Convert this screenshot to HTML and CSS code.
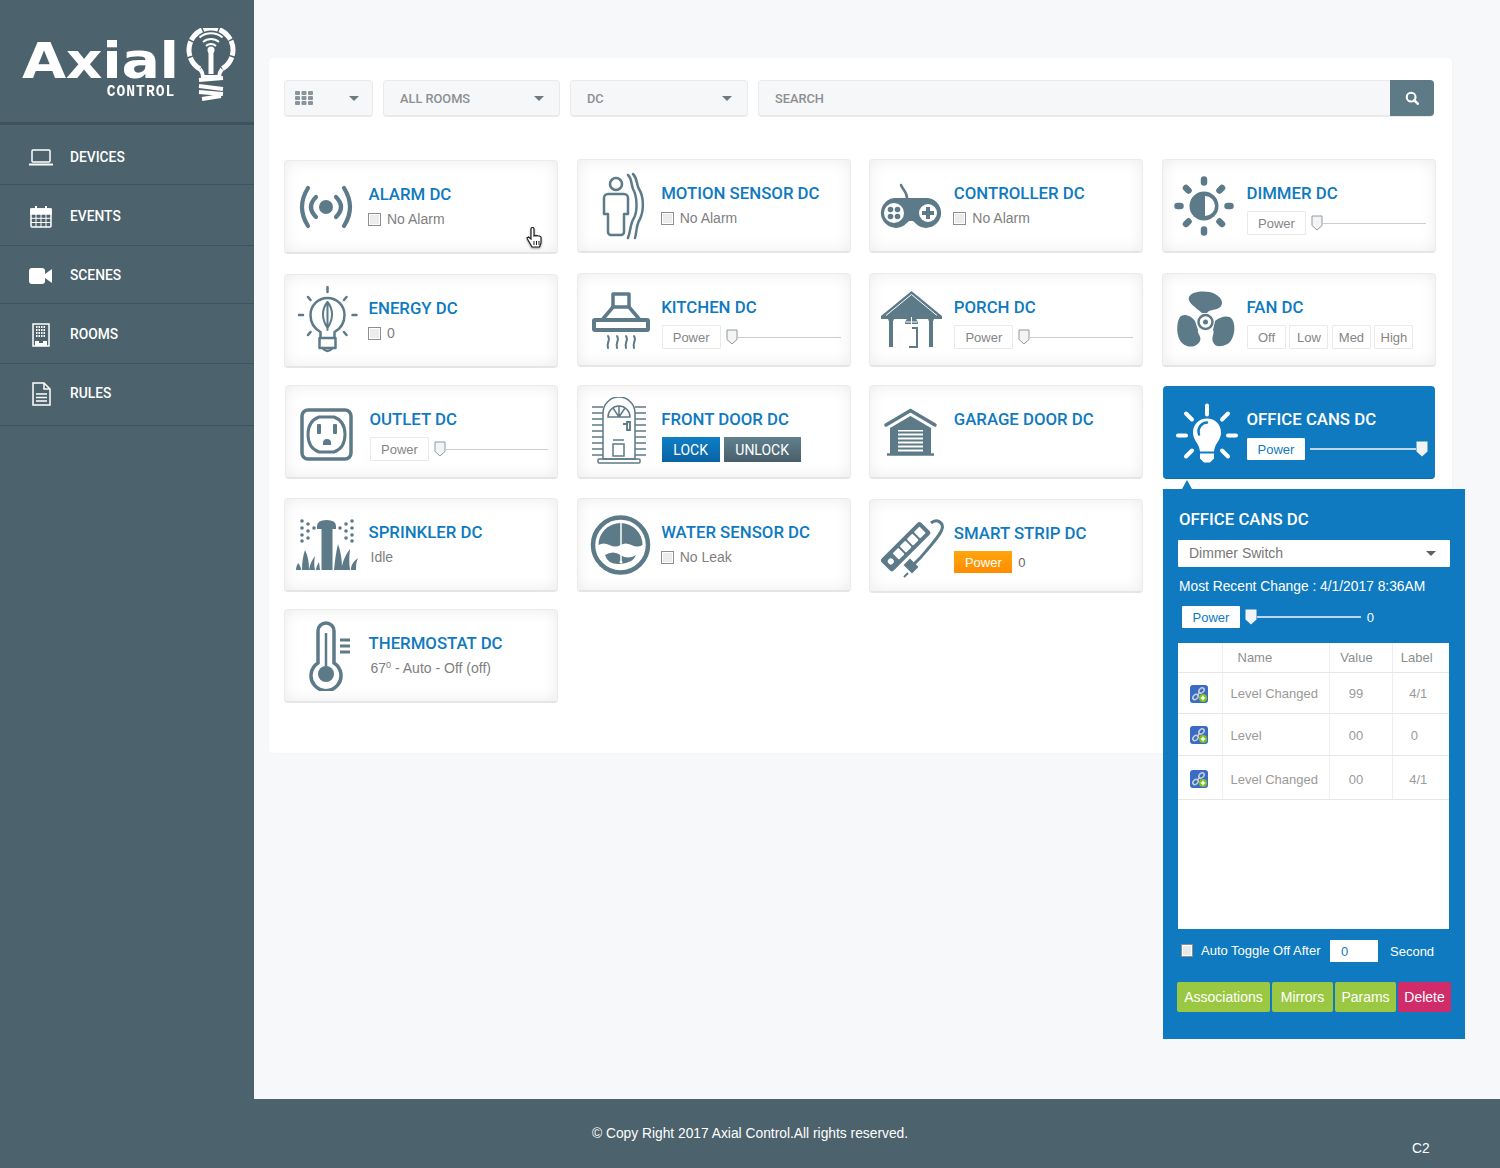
FILE: index.html
```html
<!DOCTYPE html>
<html lang="en">
<head>
<meta charset="utf-8">
<title>Axial Control</title>
<link rel="stylesheet" href="styles.css">
</head>
<body>
<svg class="defs" width="0" height="0" aria-hidden="true">
  <defs>
    <symbol id="thumb" viewBox="0 0 12 16"><path d="M1 1h10v9.5L6 15 1 10.500z" fill="#f4f4f4" stroke="#8b9aa2"/></symbol>
    <symbol id="thumbw" viewBox="0 0 12 16"><path d="M.5.500h11v10L6 15.500.5 10.500z" fill="#f1f3f5"/></symbol>
    <symbol id="link" viewBox="0 0 18 18">
      <rect width="18" height="18" rx="3" fill="#3a6cc4"/>
      <g fill="none" stroke="#c9ced6" stroke-width="1.500"><ellipse cx="5.500" cy="12" rx="3" ry="2.200" transform="rotate(-45 5.500 12)"/><ellipse cx="11.500" cy="5.500" rx="3" ry="2.200" transform="rotate(-45 11.500 5.500)"/><path d="M7 10.500l3-3.500"/></g>
      <circle cx="13" cy="13" r="4" fill="#7fc31c"/><path d="M13 10.800v4.400M10.800 13h4.400" stroke="#fff" stroke-width="1.500"/>
    </symbol>
  </defs>
</svg>
<div class="app">
  <div class="top">
    <aside class="sidebar">
      <div class="brand">
        <div class="wordmark">
          <span class="axial">Axial</span>
          <span class="control">CONTROL</span>
        </div>
        <svg class="bulb-logo" width="50" height="76" viewBox="0 0 50 76">
          <g fill="none" stroke="#fff">
            <path d="M14 41A22 22 0 1 1 36 41" stroke-width="5" stroke-dasharray="15 1.500"/>
            <path d="M17 14a12 12 0 0 1 16 0M13.500 9.500a18 18 0 0 1 23 0" stroke-width="2"/>
            <path d="M20 18a7 7 0 0 1 10 0" stroke-width="2"/>
            <path d="M25 22V46" stroke-width="5"/>
            <path d="M14 41q3 4 3 8h16q0-4 3-8" stroke-width="4"/>
            <path d="M13 52l24-2M13 58l24 3M13 64l24 2M16 71l19-3" stroke-width="4"/>
          </g>
          <circle cx="25" cy="22" r="3.500" fill="#fff"/>
        </svg>
      </div>
      <nav class="nav">
        <a class="nav-item nav-a"><span class="nav-ic"><svg width="26" height="20" viewBox="0 0 26 20" fill="none" stroke="#fff"><rect x="4" y="2" width="18" height="12" rx="1" stroke-width="1.500"/><path d="M1 16.500h24" stroke-width="2"/></svg></span>DEVICES</a>
        <a class="nav-item nav-b"><span class="nav-ic"><svg width="24" height="24" viewBox="0 0 24 24" fill="none" stroke="#fff" stroke-width="1.500"><rect x="2" y="4" width="20" height="18" rx="1"/><path d="M2 4h20v5H2z" fill="#fff"/><path d="M7 1v5M17 1v5" stroke-width="2"/><path d="M2 13.300h20M2 17.500h20M7 9v13M12 9v13M17 9v13" stroke-width="1"/></svg></span>EVENTS</a>
        <a class="nav-item nav-c"><span class="nav-ic"><svg width="24" height="16" viewBox="0 0 24 16" fill="#fff"><rect width="16" height="16" rx="3"/><path d="M16 6l7-5v14l-7-5z"/></svg></span>SCENES</a>
        <a class="nav-item nav-d"><span class="nav-ic"><svg width="18" height="24" viewBox="0 0 18 24" fill="none" stroke="#fff" stroke-width="1.500"><rect x="1" y="1" width="16" height="22"/><path d="M4 4h10M4 7h10M4 10h10M4 13h10" stroke-width="1.800" stroke-dasharray="1.500 1"/><path d="M3 23v-5h4v2h4v-2h4v5" fill="#fff" stroke="none"/></svg></span>ROOMS</a>
        <a class="nav-item nav-e"><span class="nav-ic"><svg width="20" height="24" viewBox="0 0 20 24" fill="none" stroke="#fff" stroke-width="1.500"><path d="M2 1h11l6 6v16H2z"/><path d="M13 1v6h6"/><path d="M5 12h11M5 15.500h11M5 19h11" stroke-width="1.300"/></svg></span>RULES</a>
      </nav>
    </aside>
    <main class="main">
      <section class="panel">
        <div class="toolbar">
          <div class="drop drop-view">
            <svg width="18" height="14" viewBox="0 0 18 14" fill="#8b9499"><rect width="5" height="4" rx="1"/><rect x="6.500" width="5" height="4" rx="1"/><rect x="13" width="5" height="4" rx="1"/><rect y="5" width="5" height="4" rx="1"/><rect x="6.500" y="5" width="5" height="4" rx="1"/><rect x="13" y="5" width="5" height="4" rx="1"/><rect y="10" width="5" height="4" rx="1"/><rect x="6.500" y="10" width="5" height="4" rx="1"/><rect x="13" y="10" width="5" height="4" rx="1"/></svg>
            <span class="caret"></span>
          </div>
          <div class="drop drop-room"><span class="lbl">ALL ROOMS</span><span class="caret"></span></div>
          <div class="drop drop-type"><span class="lbl">DC</span><span class="caret"></span></div>
          <div class="search">
            <span class="lbl">SEARCH</span>
            <span class="search-btn"><svg width="14" height="14" viewBox="0 0 16 16" fill="none" stroke="#fff" stroke-width="2.400"><circle cx="7" cy="7" r="5"/><path d="M10.500 10.500l4 4" stroke-width="3" stroke-linecap="round"/></svg></span>
          </div>
        </div>

        <div class="grid">
          <article class="card nudge-y">
            <div class="icon"><svg width="70" height="70" viewBox="0 0 70 70" fill="none" stroke="currentColor" stroke-width="4.200" stroke-linecap="round"><circle cx="35" cy="35" r="7" fill="currentColor" stroke="none"/><path d="M25 25Q15 35 25 45M45 25Q55 35 45 45"/><path d="M17 16Q5 35 17 54M53 16Q65 35 53 54"/></svg></div>
            <div class="body"><h3 class="title">ALARM DC</h3><div class="status"><span class="check"></span>No Alarm</div></div>
            <svg class="cursor" width="18" height="22" viewBox="0 0 18 22"><path d="M5 2a1.500 1.500 0 0 1 3 0v7l1-.5 1 .5 1-.5 1 .5 1.500 0 1.500 1v6l-1.500 4H6L2 13l-1-2 1.500-1L5 12z" fill="#fff" stroke="#222" stroke-width="1.200"/><path d="M8 14v4M10.500 14v4M13 14v4" stroke="#222"/></svg>
          </article>
          <article class="card">
            <div class="icon"><svg width="70" height="70" viewBox="0 0 70 70" fill="none" stroke="currentColor" stroke-width="2.500" stroke-linecap="round" stroke-linejoin="round"><g transform="translate(4 0)"><circle cx="28" cy="13" r="6"/><path d="M20 23h16a4 4 0 0 1 4 4v16h-4v18a3 3 0 0 1-3 3h-10a3 3 0 0 1-3-3V43h-4V27a4 4 0 0 1 4-4z"/><path d="M40 4c4 4 3 9 5 14 4 7 5 21 1 29-4 6-3 12-6 20"/><path d="M45 3c5 5 3 10 6 15 5 8 5 21 1 30-4 6-3 12-5 19"/></g></svg></div>
            <div class="body"><h3 class="title">MOTION SENSOR DC</h3><div class="status"><span class="check"></span>No Alarm</div></div>
          </article>
          <article class="card">
            <div class="icon"><svg width="70" height="70" viewBox="0 0 70 70"><path d="M18 27H52A15 15 0 1 1 42 54.500L37 50H33L28 54.500A15 15 0 1 1 18 27Z" fill="currentColor"/><path d="M31 27C31 21 27 19 25 14" fill="none" stroke="currentColor" stroke-width="2.500" stroke-linecap="round"/><circle cx="18" cy="42" r="10" fill="#fff"/><circle cx="52" cy="42" r="9" fill="#fff"/><g fill="currentColor"><circle cx="14.500" cy="38.500" r="2.800"/><circle cx="21.500" cy="38.500" r="2.800"/><circle cx="14.500" cy="45.500" r="2.800"/><circle cx="21.500" cy="45.500" r="2.800"/><path d="M50 36h4v4h4v4h-4v4h-4v-4h-4v-4h4z"/></g></svg></div>
            <div class="body"><h3 class="title">CONTROLLER DC</h3><div class="status"><span class="check"></span>No Alarm</div></div>
          </article>
          <article class="card">
            <div class="icon"><svg width="70" height="70" viewBox="0 0 70 70"><circle cx="35" cy="35" r="14.500" fill="currentColor"/><path d="M36 25A10 10 0 0 1 36 45Z" fill="#fff"/><path d="M35 8.500v3M35 58.500v3M8.500 35h3M58.500 35h3M17 17l2.500 2.500M50.500 50.500l2.500 2.500M53 17l-2.500 2.500M19.500 50.500L17 53" stroke="currentColor" stroke-width="6.500" stroke-linecap="round"/></svg></div>
            <div class="body"><h3 class="title">DIMMER DC</h3><div class="ctrl"><span class="btn">Power</span><span class="slider"><svg class="thumb"><use href="#thumb"/></svg><span class="track"></span></span></div></div>
          </article>

          <article class="card nudge-y">
            <div class="icon"><svg width="70" height="70" viewBox="0 0 70 70" fill="none" stroke="currentColor" stroke-width="2.500" stroke-linecap="round" stroke-linejoin="round"><g transform="translate(1.500 0)"><path d="M28 52V46C21 42 18 36 18 29a17 17 0 0 1 34 0c0 7-3 13-10 17v6"/><path d="M27 52h16v10H27z"/><path d="M30 62q5 6 10 0"/><path d="M35 16c-6 7-6 17 0 26c6-9 6-19 0-26zM35 16v28" stroke-width="2"/><path d="M35 1v5M6.500 29h4M60 29h4M15.500 11L18 14M54 11l-2.500 3M15.500 49L18 46M54 49l-2.500-3"/></g></svg></div>
            <div class="body"><h3 class="title">ENERGY DC</h3><div class="status"><span class="check"></span>0</div></div>
          </article>
          <article class="card">
            <div class="icon"><svg width="70" height="70" viewBox="0 0 70 70" fill="none" stroke="currentColor" stroke-width="3.500" stroke-linejoin="round"><g transform="translate(2 0)"><path d="M27 9h16v13H27z"/><path d="M27 22L16 35M43 22l11 13"/><rect x="8" y="35" width="54" height="10" stroke-width="4" rx="1"/><path d="M22 51c3 4-2 7 0 12M31 51c3 4-2 7 0 12M40 51c3 4-2 7 0 12M48 51c3 4-2 7 0 12" stroke-width="2" stroke-linecap="round"/></g></svg></div>
            <div class="body"><h3 class="title">KITCHEN DC</h3><div class="ctrl"><span class="btn">Power</span><span class="slider"><svg class="thumb"><use href="#thumb"/></svg><span class="track"></span></span></div></div>
          </article>
          <article class="card">
            <div class="icon"><svg width="70" height="70" viewBox="0 0 70 70"><path d="M35.500 6L66 31V34H5V31Z" fill="currentColor"/><path d="M35.500 9.500L61 30.500M35.500 9.500L10 30.500" stroke="#fff" stroke-width="1"/><path d="M13 33h4v29h-4zM53 33h4v29h-4z" fill="currentColor"/><circle cx="15" cy="34" r="2.800" fill="currentColor"/><circle cx="55" cy="34" r="2.800" fill="currentColor"/><path d="M29 39a6.500 7 0 0 1 13 0z" fill="currentColor"/><path d="M35.500 32v7M30 37h11" stroke="#fff"/><path d="M36 43h5v19h-8" fill="none" stroke="currentColor" stroke-width="2"/></svg></div>
            <div class="body"><h3 class="title">PORCH DC</h3><div class="ctrl"><span class="btn">Power</span><span class="slider"><svg class="thumb"><use href="#thumb"/></svg><span class="track"></span></span></div></div>
          </article>
          <article class="card">
            <div class="icon"><svg width="70" height="70" viewBox="0 0 70 70" fill="currentColor"><path d="M33 28C26 22 18 17 20 12C23 6 38 5 46 9C54 13 55 20 50 23C44 26 41 24 38 28Z"/><path d="M26 36C22 30 14 28 11 32C7 38 7 52 13 58C20 64 28 62 31 56C33 51 28 49 29 45Z"/><path d="M46 36C52 31 60 30 63 34C67 40 66 52 60 58C52 63 46 62 44 57C42 52 46 48 44 45Z"/><circle cx="36.500" cy="37" r="9" fill="#fff"/><circle cx="36.500" cy="37" r="7" fill="none" stroke="currentColor" stroke-width="2.500"/><circle cx="36.500" cy="37" r="2.500"/></svg></div>
            <div class="body"><h3 class="title">FAN DC</h3><div class="ctrl ctrl-fan"><span class="btn btn-fan">Off</span><span class="btn btn-fan">Low</span><span class="btn btn-fan">Med</span><span class="btn btn-fan">High</span></div></div>
          </article>

          <article class="card nudge-x">
            <div class="icon"><svg width="70" height="70" viewBox="0 0 70 70"><rect x="10" y="13" width="49" height="49" rx="6" fill="none" stroke="currentColor" stroke-width="3.500"/><path d="M27 20h15q11 4 11 17.500T42 55H27Q16 51 16 37.500T27 20Z" fill="none" stroke="currentColor" stroke-width="3"/><rect x="25" y="27" width="4" height="10" rx="1" fill="currentColor"/><rect x="41" y="27" width="4" height="10" rx="1" fill="currentColor"/><path d="M31 48v-2a4 4 0 0 1 8 0v2z" fill="currentColor"/></svg></div>
            <div class="body"><h3 class="title">OUTLET DC</h3><div class="ctrl"><span class="btn">Power</span><span class="slider"><svg class="thumb"><use href="#thumb"/></svg><span class="track"></span></span></div></div>
          </article>
          <article class="card">
            <div class="icon"><svg width="70" height="70" viewBox="0 0 70 70" fill="none" stroke="currentColor" stroke-width="1.500"><path d="M19 40V16a16 16 0 0 1 32 0v46H19z"/><path d="M24 20a11 11 0 0 1 22 0zM35 9v11M29 11l6 9M41 11l-6 9"/><path d="M8 10h11M8 16h11M8 22h11M8 28h11M8 34h11M8 40h11M8 46h11M8 52h11M8 58h11M51 10h11M51 16h11M51 22h11M51 28h11M51 34h11M51 40h11M51 46h11M51 52h11M51 58h11"/><rect x="29" y="47" width="11" height="12"/><path d="M29 43h11"/><path d="M39 27h5M43 25h3v8h-3z" stroke-width="1.800"/><rect x="14" y="62" width="42" height="4" rx="1"/></svg></div>
            <div class="body"><h3 class="title">FRONT DOOR DC</h3><div class="ctrl ctrl-lock"><span class="act act-lock">LOCK</span><span class="act act-unlock">UNLOCK</span></div></div>
          </article>
          <article class="card">
            <div class="icon"><svg width="70" height="70" viewBox="0 0 70 70"><path d="M10 28L34.500 13.500L59 28" fill="none" stroke="currentColor" stroke-width="3.500" stroke-linecap="round"/><path d="M34.500 19L55 31V57H14V31Z" fill="currentColor"/><path d="M22 33h25v23H22z" fill="#fff"/><path d="M22 35.500h25M22 39.500h25M22 43.500h25M22 47.500h25M22 51.500h25M22 55.500h25" stroke="currentColor" stroke-width="2"/><path d="M11 57.500h47" stroke="currentColor" stroke-width="2.500"/></svg></div>
            <div class="body"><h3 class="title">GARAGE DOOR DC</h3></div>
          </article>
          <article class="card card-on">
            <div class="icon"><svg width="70" height="70" viewBox="0 0 70 70" fill="#fff"><g transform="translate(2 2.500)"><path d="M36 18c-8 0-14 6-14 14 0 8 6 10 7 19h14c1-9 7-11 7-19 0-8-6-14-14-14zM29 53h14v5l-4 4h-6l-4-4z"/><path d="M28 34c-2-7 3-12 8-12" stroke="#0f7abf" stroke-width="2.500" fill="none" stroke-linecap="round"/><path d="M36 5v9M7 35h8M57 35h8M15 13l6 6M57 13l-6 6M15 56l6-6M57 56l-6-6" stroke="#fff" stroke-width="4" stroke-linecap="round"/></g></svg></div>
            <div class="body"><h3 class="title">OFFICE CANS DC</h3><div class="ctrl"><span class="btn btn-on">Power</span><span class="slider"><span class="track track-on"></span><svg class="thumb"><use href="#thumbw"/></svg></span></div></div>
          </article>

          <article class="card">
            <div class="icon"><svg width="70" height="70" viewBox="0 0 70 70" fill="currentColor"><path d="M26 19v-3q0-6 9.500-6t9.500 6v3h-3.500v41h-11V19z"/><path d="M5 60C5 57 6 55 7 53C9 55 10 58 10 60ZM11 60C11 52 12 46 14 40C17 46 18 52 18 60ZM18 60C19 54 21 50 24 46C23 51 23 56 24 60ZM25 60C25 58 26 55 28 52L29 60ZM43 60C44 50 45 42 47 34C50 42 51 50 51 60ZM50 60C52 50 55 44 59 39C58 47 58 53 59 60ZM60 60C60 55 62 52 67 48C65 52 65 56 65 60Z"/><g><circle cx="11" cy="11" r="1.800"/><circle cx="11" cy="18" r="1.800"/><circle cx="11" cy="25" r="1.800"/><circle cx="17" cy="14" r="1.800"/><circle cx="17" cy="21" r="1.800"/><circle cx="11" cy="31" r="1.800"/><circle cx="23" cy="18" r="1.800"/><circle cx="17" cy="28" r="1.800"/><circle cx="61" cy="11" r="1.800"/><circle cx="61" cy="18" r="1.800"/><circle cx="61" cy="25" r="1.800"/><circle cx="55" cy="14" r="1.800"/><circle cx="55" cy="21" r="1.800"/><circle cx="61" cy="31" r="1.800"/><circle cx="49" cy="18" r="1.800"/><circle cx="55" cy="28" r="1.800"/></g></svg></div>
            <div class="body"><h3 class="title">SPRINKLER DC</h3><div class="status status-plain">Idle</div></div>
          </article>
          <article class="card">
            <div class="icon"><svg width="70" height="70" viewBox="0 0 70 70"><circle cx="36.500" cy="35" r="27.500" fill="none" stroke="currentColor" stroke-width="4.500"/><path d="M14.500 35a22 22 0 0 1 44 0q-5 3-11 0t-11 0t-11 0t-11 0z" fill="currentColor"/><path d="M21 45q8-5 15.500 0t15.500 0q-3 8-15.500 9T21 45z" fill="currentColor"/><path d="M37 13v39" stroke="#fff" stroke-width="1.500"/><circle cx="37" cy="52" r="1.500" fill="#fff"/></svg></div>
            <div class="body"><h3 class="title">WATER SENSOR DC</h3><div class="status"><span class="check"></span>No Leak</div></div>
          </article>
          <article class="card nudge-y">
            <div class="icon"><svg width="70" height="70" viewBox="0 0 70 70" fill="none" stroke="currentColor"><g transform="rotate(-45 30 36)"><rect x="2" y="27" width="56" height="17" rx="3" fill="currentColor" stroke="none"/><g fill="#fff" stroke="none"><circle cx="9" cy="35.500" r="3"/><rect x="16" y="31" width="8" height="9" rx="1"/><rect x="26" y="31" width="8" height="9" rx="1"/><rect x="36" y="31" width="8" height="9" rx="1"/><rect x="46" y="31" width="8" height="9" rx="1"/></g></g><path d="M55 12c6-5 13 0 11 6-1 5-9 14-21 28l-9 9" stroke-width="3"/><path d="M41 56l-7-7-5 5 7 7zM32 62l-4 4" fill="currentColor" stroke-width="2"/></svg></div>
            <div class="body"><h3 class="title">SMART STRIP DC</h3><div class="ctrl ctrl-strip"><span class="act-power">Power</span><span class="num">0</span></div></div>
          </article>

          <article class="card row-start">
            <div class="icon"><svg width="70" height="70" viewBox="0 0 70 70"><path d="M27 42V10a8 8 0 0 1 16 0v32a15 15 0 1 1-16 0Z" fill="none" stroke="currentColor" stroke-width="3.500"/><circle cx="35" cy="53" r="8" fill="currentColor"/><path d="M35 12V50" stroke="currentColor" stroke-width="2.500"/><path d="M49 19h10M49 25h10M49 31h10" stroke="currentColor" stroke-width="3"/></svg></div>
            <div class="body"><h3 class="title">THERMOSTAT DC</h3><div class="status status-plain">67<sup>0</sup> - Auto - Off (off)</div></div>
          </article>
        </div>
      </section>

      <section class="popup">
        <span class="popup-arrow"></span>
        <h2 class="popup-title">OFFICE CANS DC</h2>
        <div class="type-select"><span>Dimmer Switch</span><span class="caret caret-dark"></span></div>
        <p class="recent">Most Recent Change : 4/1/2017 8:36AM</p>
        <div class="popup-power"><span class="btn btn-on">Power</span><span class="slider"><svg class="thumb"><use href="#thumbw"/></svg><span class="track track-on"></span></span><span class="pop-num">0</span></div>
        <div class="table-box">
          <table class="events">
            <colgroup><col class="c1"><col class="c2"><col class="c3"><col class="c4"></colgroup>
            <thead><tr class="r-head"><th></th><th class="th-name">Name</th><th class="th-val">Value</th><th class="th-lab">Label</th></tr></thead>
            <tbody>
              <tr class="r1"><td class="ctr"><svg class="link" width="18" height="18"><use href="#link"/></svg></td><td>Level Changed</td><td class="ctr col-val">99</td><td class="ctr col-lab">4/1</td></tr>
              <tr class="r1"><td class="ctr"><svg class="link" width="18" height="18"><use href="#link"/></svg></td><td>Level</td><td class="ctr col-val">00</td><td class="ctr col-zero">0</td></tr>
              <tr class="r2"><td class="ctr"><svg class="link" width="18" height="18"><use href="#link"/></svg></td><td>Level Changed</td><td class="ctr col-val">00</td><td class="ctr col-lab">4/1</td></tr>
            </tbody>
          </table>
        </div>
        <div class="toggle-row">
          <span class="check check-pop"></span>
          <span class="toggle-label">Auto Toggle Off After</span>
          <span class="toggle-input">0</span>
          <span class="toggle-sec">Second</span>
        </div>
        <div class="pop-actions">
          <span class="pbtn pbtn-a">Associations</span>
          <span class="pbtn pbtn-b">Mirrors</span>
          <span class="pbtn pbtn-b">Params</span>
          <span class="pbtn pbtn-del">Delete</span>
        </div>
      </section>
    </main>
  </div>
  <footer class="footer">
    <span>© Copy Right 2017 Axial Control.All rights reserved.</span>
    <span class="build">C2</span>
  </footer>
</div>
</body>
</html>
```

FILE: styles.css
```css
* { box-sizing: border-box; }
html, body { margin: 0; height: 100%; }
body { font-family: "Liberation Sans", Arial, sans-serif; color: #808080; background: #f7f8fa; }
.defs { position: absolute; }
.app { display: flex; flex-direction: column; height: 1168px; overflow: hidden; }
.top { display: flex; flex: 1; min-height: 0; }

/* sidebar */
.sidebar { width: 254px; flex: none; background: #4c626c; }
.brand { height: 125px; border-bottom: 3px solid #3f525b; display: flex; align-items: flex-start; padding: 28px 0 0 22px; gap: 8px; }
.wordmark { width: 156px; display: flex; flex-direction: column; align-items: flex-end; padding-top: 14px; color: #fff; }
.axial { display: block; width: 156px; font: 700 50px/38px "DejaVu Sans", sans-serif; transform: scaleX(1.14); transform-origin: left center; letter-spacing: -0.3px; }
.control { font: 700 15px/15px "Liberation Mono", monospace; letter-spacing: 1px; margin: 4px 2px 0 0; transform: scale(.98, 1.15); }
.bulb-logo { flex: none; }
.nav { display: flex; flex-direction: column; }
.nav-item { display: flex; align-items: center; font: 500 13.800px/1 Roboto, sans-serif; color: #fff; border-bottom: 1px solid #3f535d; }
.nav-a { height: 60px; padding-top: 6px; }
.nav-b { height: 61px; padding-top: 3px; }
.nav-c { height: 58px; padding-top: 2px; }
.nav-d { height: 60px; padding-top: 2px; }
.nav-e { height: 62px; padding-bottom: 2px; }
.nav-ic { width: 70px; padding-left: 12px; display: flex; justify-content: center; flex: none; }

/* main */
.main { position: relative; flex: 1; padding: 58px 48px 0 15px; }
.panel { width: 1183px; height: 695px; background: #fff; border-radius: 4px; box-shadow: 0 0 2px rgba(0,0,0,.06); padding: 22px 15px; }
.toolbar { display: flex; gap: 10px; height: 37px; font: 500 12.800px/1 Roboto, sans-serif; color: #8b8f92; }
.lbl { padding-top: 2px; }
.drop { display: flex; align-items: center; justify-content: space-between; background: #f6f7f9; border: 1px solid #e8eaec; border-bottom-width: 2px; border-radius: 4px; }
.drop-view { width: 89px; padding: 0 13px 0 10px; }
.drop-room { width: 177px; padding: 0 15px 0 16px; }
.drop-type { width: 178px; padding: 0 15px 0 16px; }
.caret { width: 0; height: 0; border: 5px solid transparent; border-top: 5px solid #6f7a80; border-bottom: 0; }
.caret-dark { border-top-color: #5d6468; }
.search { flex: 1; margin-right: 3px; display: flex; align-items: center; justify-content: space-between; background: #f6f7f9; border: 1px solid #e8eaec; border-bottom-width: 2px; border-radius: 4px; padding-left: 16px; }
.search-btn { width: 44px; height: 36px; margin: -1px -1px -1px 0; background: #5e7a87; border-radius: 0 4px 4px 0; display: flex; align-items: center; justify-content: center; }

/* grid */
.grid { display: grid; grid-template-columns: repeat(4, 274px); column-gap: 18.670px; grid-template-rows: 114px 112px 113px 111px 94px; margin-top: 42px; align-items: start; }
.card { position: relative; display: flex; height: 94px; background: #fff; border-radius: 4px; border: 1px solid #ebebec; border-bottom: 2px solid #e4e5e6; box-shadow: inset 0 0 16px rgba(0,0,0,.08); color: #5d7a88; }
.nudge-y { margin-top: 1px; }
.nudge-x { margin-left: 1px; }
.row-start { grid-column: 1; }
.icon { width: 84px; flex: none; display: flex; align-items: center; justify-content: center; margin-left: -1px; margin-right: .500px; padding-top: 1px; }
.body { flex: 1; min-width: 0; padding: 23px 9px 0 0; }
.title { margin: 0; font: 500 16.800px/20px Roboto, sans-serif; color: #0f7abf; }
.status { display: flex; align-items: center; height: 16px; margin-top: 7px; font: 14px/16px "Liberation Sans", sans-serif; color: #808080; margin-left: -.500px; }
.status-plain { margin-left: 2px; display: block; }
sup { font-size: 9px; line-height: 0; vertical-align: 5px; }
.check { width: 13px; height: 13px; background: #ececec; border: 1px solid #8e8e8e; box-shadow: inset 0 0 0 1px #fff; margin-right: 6px; flex: none; }
.ctrl { display: flex; align-items: center; height: 24px; margin: 8px 0 0 .500px; }
.btn { display: flex; align-items: center; justify-content: center; width: 59px; height: 24px; flex: none; border: 1px solid #e9e9e9; background: #fff; font: 13px/1 "Liberation Sans", sans-serif; color: #858585; border-radius: 1px; }
.ctrl-fan { gap: 3.500px; }
.btn-fan { width: 39px; }
.btn-on { border: 0; color: #0f7abf; height: 22px; width: 58px; }
.slider { display: flex; flex: 1; align-items: center; margin-left: 5px; }
.thumb { width: 12px; height: 16px; flex: none; }
.track { flex: 1; height: 1px; background: #c9cdd0; }
.track-on { background: #bcd9ec; height: 1.500px; }
.ctrl-lock { gap: 4px; height: 25px; }
.act { height: 25px; display: flex; align-items: center; justify-content: center; color: #fff; font: 14px/1 Roboto, sans-serif; }
.act-lock { width: 58px; background: linear-gradient(#0f7fc6, #0a62a3); }
.act-unlock { width: 77px; background: linear-gradient(#60808e, #485f6a); }
.ctrl-strip { height: 22px; gap: 6px; }
.act-power { width: 58px; height: 22px; display: flex; align-items: center; justify-content: center; color: #fff; font: 13px/1 "Liberation Sans", sans-serif; background: linear-gradient(#ffa60f, #ff8c00); }
.num { font: 13px/1 "Liberation Sans", sans-serif; color: #666; }
.card-on { background: #0f7abf; border: 0; border-bottom: 1px solid #0d6dac; box-shadow: none; margin: 1px 0 0 1px; height: 93px; width: 272px; }
.card-on .title { color: #fff; }
.card-on .icon { color: #fff; }
.card-on .body { padding-right: 7px; }
.cursor { position: absolute; left: 241px; top: 66px; filter: drop-shadow(0 1px 1px rgba(0,0,0,.4)); }

/* popup */
.popup { position: absolute; left: 909px; top: 489px; width: 302px; height: 550px; background: #0f7abf; padding: 20px 14px 0 15px; color: #fff; }
.popup-arrow { position: absolute; left: 19px; top: -9px; width: 0; height: 0; border: 5px solid transparent; border-bottom: 9px solid #0f7abf; border-top: 0; }
.popup-title { margin: 0 0 0 1px; font: 500 16.800px/20px Roboto, sans-serif; color: #fff; }
.type-select { display: flex; align-items: center; justify-content: space-between; width: 272px; height: 27px; margin-top: 11px; padding: 0 14px 1px 11px; background: #fff; color: #777; font: 14px/1 "Liberation Sans", sans-serif; border-radius: 1px; }
.recent { margin: 12px 0 0 1px; font: 13.800px/16px "Liberation Sans", sans-serif; }
.popup-power { display: flex; align-items: center; height: 22px; margin: 11px 0 0 4px; width: 192px; }
.pop-num { font: 13px/1 "Liberation Sans", sans-serif; margin-left: 6px; }
.table-box { width: 271px; height: 286px; margin-top: 15px; background: #fff; }
.events { width: 271px; border-collapse: collapse; table-layout: fixed; font: 13px/1 "Liberation Sans", sans-serif; color: #9a9a9a; }
.c1 { width: 44px; }
.c2 { width: 107px; }
.c3 { width: 63px; }
.c4 { width: 57px; }
.events th { font-weight: 400; color: #8e8e8e; text-align: center; border-right: 1px solid #eee; border-bottom: 1px solid #e6e6e6; }
.events td { padding: 2px 0 0 8px; border-right: 1px solid #eee; border-bottom: 1px solid #e6e6e6; }
.events td.ctr { padding: 2px 0 0; text-align: center; }
.events .r2 td { padding-top: 4px; }
.events td.col-val { padding-right: 9px; }
.events td.col-lab { padding-right: 5px; }
.events td.col-zero { padding-right: 13px; }
.events th.th-val { padding-right: 9px; }
.events th.th-lab { padding-right: 9px; }
.events tr > :last-child { border-right: 0; }
.th-name { text-align: left !important; padding-left: 15px; }
.r-head { height: 29px; }
.r1 { height: 41.500px; }
.r2 { height: 44.500px; }
.link { display: block; margin: 0 auto; transform: translateX(-1px); }
.toggle-row { display: flex; align-items: center; height: 22px; margin-top: 11px; padding-left: 3px; font: 13px/1 "Liberation Sans", sans-serif; }
.check-pop { width: 12px; height: 13px; margin: -2px 8px 0 0; background: #e9e9e9; }
.toggle-label { width: 129px; margin-top: -2px; }
.toggle-input { width: 48px; height: 22px; background: #fff; color: #0f7abf; display: flex; align-items: center; padding-left: 11px; }
.toggle-sec { margin-left: 12px; }
.pop-actions { display: flex; gap: 2px; margin: 20px 0 0 -1px; }
.pbtn { height: 30px; display: flex; align-items: center; justify-content: center; color: #fff; font: 14px/1 "Liberation Sans", sans-serif; border-radius: 2px; }
.pbtn-a { width: 93px; background: #9bc843; }
.pbtn-b { width: 61px; background: #9bc843; }
.pbtn-del { width: 53px; background: #d02c6a; }

/* footer */
.footer { position: relative; height: 69px; flex: none; background: #4c626c; color: #fff; font: 13.800px/1 "Liberation Sans", sans-serif; display: flex; justify-content: center; padding-top: 28px; }
.build { position: absolute; left: 1412px; top: 43px; }
```
